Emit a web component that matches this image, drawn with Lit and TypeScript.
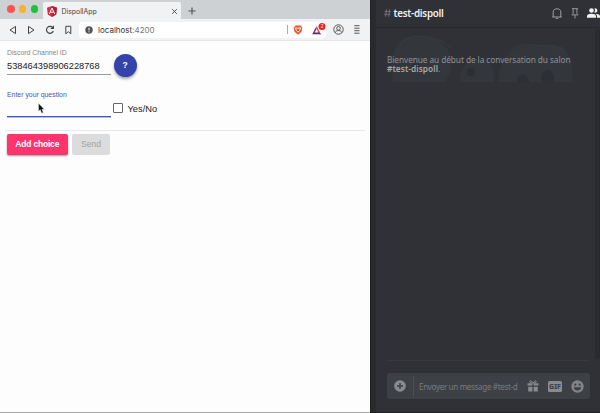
import { LitElement, html, css } from "lit";
import { customElement } from "lit/decorators.js";

@customElement("browser-window")
class BrowserWindow extends LitElement {
  static styles = css`
    :host { display: flex; flex-direction: column; width: 370px; height: 412px; background: #fdfdfe; color: #222; font-family: "Liberation Sans", Arial, sans-serif; }
    * { box-sizing: border-box; }
    svg { display: block; overflow: visible; flex: none; }
    .tabs { display: flex; height: 19px; flex: none; background: #cdd1d4; padding-left: 7px; }
    .lights { display: flex; gap: 4.3px; padding-top: 5px; width: 36px; flex: none; }
    .light { width: 7.5px; height: 7.5px; border-radius: 50%; flex: none; }
    .red { background: #f95650; }
    .amber { background: #fcb02c; }
    .green { background: #1fc136; }
    .tab { display: flex; align-items: center; width: 138px; margin-top: 2px; height: 17px; background: #f1f2f3; border-radius: 2px 2px 0 0; padding: 1px 4px 0 4px; font: 6.9px Inter, sans-serif; color: #444; }
    .title { margin-left: 4.5px; flex: 1; white-space: nowrap; }
    .plus { margin: 7px 0 0 7px; }
    .bar { display: flex; align-items: center; height: 22px; flex: none; background: #f1f2f3; border-bottom: 1px solid #e8e8e9; padding-left: 8px; }
    .nav { display: flex; gap: 8.3px; width: 71px; }
    .address { display: flex; align-items: center; width: 247px; height: 16px; border-radius: 3px; background: #fff; padding-left: 6px; }
    .url { margin-left: 5px; font: 8px/16px Inter, sans-serif; color: #333; flex: 1; }
    .port { color: #777; }
    .sep { width: 1px; height: 9px; background: #aaa; margin-right: 5px; }
    .shields { margin-right: 10px; }
    .user { margin-left: 7px; }
    .menu { margin-left: 10px; }
    .page { padding: 0 0 0 7px; display: flex; flex-direction: column; }
    .row { display: flex; }
    .field { width: 104px; }
    .label { font-size: 6.9px; line-height: 8px; color: #858585; white-space: nowrap; }
    .channel { margin-top: 8px; border-bottom: 1px solid #999; height: 25.5px; }
    .value { font-size: 9.25px; line-height: 11px; margin-top: 4px; color: #222; white-space: nowrap; }
    .help { width: 23px; height: 23px; border-radius: 50%; background: #3343ab; color: #fff; font-weight: bold; font-size: 8.5px; line-height: 23px; text-align: center; margin: 13px 0 0 2.5px; box-shadow: 0 2px 3px #0005; }
    .question { margin-top: 14px; height: 26px; border-bottom: 1px solid #4056c4; box-shadow: 0 1px 0 #4a5cba66; }
    .question .label { color: #4556b9; }
    .check { display: flex; align-items: center; margin: 25px 0 0 2px; height: 12px; font-size: 9.3px; gap: 5px; white-space: nowrap; }
    .box { width: 9.5px; height: 9.5px; border: 1px solid #666; border-radius: 1px; }
    .option { padding-top: 1px; }
    .rule { height: 1px; width: 360px; margin: 13px 0 0 -2px; background: #e9e9e9; }
    .buttons { display: flex; gap: 4.5px; margin-top: 3px; }
    .btn { height: 20.5px; border-radius: 2px; line-height: 20.5px; text-align: center; font-size: 8.6px; }
    .add { width: 60.5px; background: #fd346e; color: #fff; font-weight: bold; font-size: 8.5px; letter-spacing: -.2px; box-shadow: 0 1px 2px #0006; }
    .send { width: 38px; background: #dcdcdc; color: #a2a2a2; }
    .pointer { position: absolute; left: 38px; top: 102.5px; }
  `;
  render() {
    return html`
      <div class="tabs">
        <div class="lights"><span class="light red"></span><span class="light amber"></span><span class="light green"></span></div>
        <div class="tab">
          <svg width="10" height="11" viewBox="0 0 10 11"><path fill="#d92c3b" d="M5 0 10 1.8 9.2 8.5 5 11 .8 8.5 0 1.8Z"/><path fill="#b22235" d="M5 0 10 1.8 9.2 8.5 5 11Z"/><path fill="none" stroke="#fff" stroke-width="1" d="M2.3 8 5 2 7.7 8M3.5 6.2h3"/></svg>
          <span class="title">DispollApp</span>
          <svg width="5" height="5" viewBox="0 0 5 5"><path stroke="#444" stroke-width=".9" d="m.2.2 4.6 4.6M4.8.2.2 4.8"/></svg>
        </div>
        <svg class="plus" width="8" height="8" viewBox="0 0 8 8"><path stroke="#555" stroke-width="1.2" d="M.5 4h7M4 .5v7"/></svg>
      </div>
      <div class="bar">
        <div class="nav">
          <svg width="10" height="10" viewBox="0 0 10 10" fill="none" stroke="#444" stroke-width="1"><path stroke-linejoin="round" d="M7.5 1.4v7.2L2 5Z"/></svg>
          <svg width="10" height="10" viewBox="0 0 10 10" fill="none" stroke="#444" stroke-width="1"><path stroke-linejoin="round" d="M2.5 1.4v7.2L8 5Z"/></svg>
          <svg width="10" height="10" viewBox="0 0 10 10" fill="none" stroke="#444" stroke-width="1.15"><path d="M8 3A3.5 3.5 0 1 0 8.3 6M8.4.8v2.7H5.7"/></svg>
          <svg width="10" height="10" viewBox="0 0 10 10" fill="none" stroke="#444" stroke-width="1"><path d="M2.8 1.3h5v7.5L5.3 6.7 2.8 8.8Z"/></svg>
        </div>
        <div class="address">
          <svg width="8" height="8" viewBox="0 0 8 8"><circle cx="4" cy="4" r="3.7" fill="#505256"/><path stroke="#fff" stroke-width="1" d="M4 1.8v2.7M4 5.3v1"/></svg>
          <span class="url">localhost<span class="port">:4200</span></span>
          <span class="sep"></span>
          <svg class="shields" width="9" height="10" viewBox="0 0 9 10"><path fill="#f0522b" d="M2.7.5h4.6L9.3 2.3 8.5 6.7 5 9.7 1.5 6.7.7 2.3Z"/><path fill="none" stroke="#fff" stroke-width=".9" d="M2.3 2.7 5 3.3l2.7-.6-.9 2.5-1.8 2-1.8-2Z"/></svg>
          <svg width="14" height="14" viewBox="0 0 14 14"><path fill="#f04a32" d="m4.6 3 4.4 8.2H7.2L4.6 6Z"/><path fill="#9a2470" d="M4.6 3v3L2.7 9.5 .2 11.2Z"/><path fill="#502b82" d="m.2 11.2 1.8-1.8h5.1l1.9 1.8Z"/><circle cx="10" cy="3.4" r="3.5" fill="#f51b20"/><text x="10" y="5.1" text-anchor="middle" fill="#fff" font-size="4.8">2</text></svg>
        </div>
        <svg class="user" width="11" height="11" viewBox="0 0 11 11" fill="none" stroke="#555" stroke-width="1"><circle cx="5.5" cy="5.5" r="4.7"/><circle cx="5.5" cy="4.3" r="1.8"/><path d="M2.2 8.6c.5-1.6 1.6-2 3.3-2s2.8.4 3.3 2"/></svg>
        <svg class="menu" width="6" height="9" viewBox="0 0 6 9"><path stroke="#555" stroke-width="1" d="M.3 .7h5.2M.3 3.2h5.2M.3 5.7h5.2M.3 8.2h5.2"/></svg>
      </div>
      <div class="page">
        <div class="row">
          <div class="field channel"><div class="label">Discord Channel ID</div><div class="value">538464398906228768</div></div>
          <div class="help">?</div>
        </div>
        <div class="row">
          <div class="field question"><div class="label">Enter your question</div></div>
          <div class="check"><span class="box"></span><span class="option">Yes/No</span></div>
        </div>
        <div class="rule"></div>
        <div class="buttons"><div class="btn add">Add choice</div><div class="btn send">Send</div></div>
      </div>
      <svg class="pointer" width="7" height="11" viewBox="0 0 7 11"><path fill="#111" stroke="#fff" stroke-width=".4" d="M.5.3v8l1.8-1.5 1.4 3.4 1.6-.7-1.4-3.2h2.4Z"/></svg>
    `;
  }
}

@customElement("chat-panel")
class ChatPanel extends LitElement {
  static styles = css`
    :host { display: flex; width: 230px; height: 412px; background: #2f3136; font-family: "Noto Sans", "Open Sans", sans-serif; }
    * { box-sizing: border-box; }
    svg { display: block; overflow: visible; flex: none; }
    .edge { width: 6px; background: #282a2e; border-left: 1px solid #202226; flex: none; }
    .main { flex: 1; display: flex; flex-direction: column; min-width: 0; }
    .head { height: 28px; flex: none; display: flex; align-items: center; border-bottom: 1px solid #26282c; padding: 0 0 1px 8px; color: #f0f0f1; }
    .name { font: 600 9.8px "Noto Sans", sans-serif; letter-spacing: -.25px; margin-left: 2.5px; flex: 1; white-space: nowrap; }
    .bell { margin-right: 9px; }
    .pin { margin-right: 8px; }
    .people { margin-right: 1px; }
    .body { flex: 1; display: flex; }
    .content { width: 213px; padding-left: 11px; display: flex; flex-direction: column; }
    .welcome { height: 333px; border-bottom: 1px solid #393b40; width: 202px; display: flex; flex-direction: column; position: relative; }
    .art { position: absolute; left: 4px; top: 6px; }
    .intro { position: relative; margin-top: 26.5px; font-size: 8.3px; letter-spacing: -.08px; line-height: 10px; color: #909296; white-space: nowrap; }
    .first { height: 9.5px; }
    .second { height: 10px; letter-spacing: .06px; }
    b { color: #a6a8ab; font-weight: 600; }
    .input { width: 203px; height: 26px; margin-top: 12px; border-radius: 3px; background: #3d4045; display: flex; align-items: center; padding: 0 7px; color: #787b80; }
    .line { width: 1px; height: 21px; background: #4b4e53; margin: 0 5px 0 7px; flex: none; }
    .hint { font-size: 8.1px; letter-spacing: -.36px; flex: 1; min-width: 0; white-space: nowrap; }
    .icons { display: flex; gap: 9px; align-items: center; flex: none; margin-right: -.5px; }
    .track { width: 5px; margin: 1px 0 53px auto; background: #292b2f; border-radius: 2px 0 0 2px; }
  `;
  render() {
    return html`
      <div class="edge"></div>
      <div class="main">
        <div class="head">
          <svg width="7" height="8" viewBox="0 0 7 8" stroke="#74777d" stroke-width=".9"><path d="M2.5.3 1.5 7.7M5.7.3 4.7 7.7M.5 2.6h6.3M.1 5.3h6.3"/></svg>
          <span class="name">test-dispoll</span>
          <svg class="bell" width="10" height="11" viewBox="0 0 10 11" fill="none" stroke="#aaacb0" stroke-width=".9"><path d="M.2 9h9.6M1.2 9V3.8C1.2 2 2.8.8 5 .8s3.8 1.2 3.8 3V9M3.7 10.3h2.6"/></svg>
          <svg class="pin" width="8" height="11" viewBox="0 0 8 11" fill="none" stroke="#a0a2a6" stroke-width=".9"><path d="M1 .7h6M2.1.7v4.7L.9 6.9h6.2L5.9 5.4V.7M4 6.9v3.6"/></svg>
          <svg class="people" width="12" height="10" viewBox="0 0 12 10" fill="#f2f2f2"><circle cx="4.5" cy="2.5" r="2.3"/><path d="M0 9.7V8c0-3 9-3 9 0v1.7ZM7.4.3A2.3 2.3 0 1 1 7.4 4.7 3.5 3.5 0 0 0 7.4.3ZM8.3 5.8c3 .2 4.7 1 4.7 2.5v1.4h-3V8c0-1-.7-1.7-1.7-2.2Z"/></svg>
        </div>
        <div class="body">
          <div class="content">
            <div class="welcome">
              <svg class="art" width="190" height="50" viewBox="0 0 190 50" fill="#33363b"><path d="M2 48C-2 20 5 2 26 2c17 0 32 8 34 22 2 8-1 16-6 24ZM69 48c0-15 7-23 20-23 11 0 15 10 14 23ZM107 48c2-25 11-32 24-35 14-3 31-3 38-1 10 4 13 18 13 36Z"/><path fill="none" stroke="#383b40" d="M9 10C18-3 48 2 61 14M118 17c12-8 27-7 34-5M153 12c12 0 18 2 22 8"/><g fill="#2d2f34"><circle cx="25" cy="33" r="4"/><circle cx="80" cy="38" r="4"/><path d="M126 48c0-10 12-10 12 0ZM150 44c0-10 13-10 13 0s-13 5-13 0Z"/></g></svg>
              <div class="intro"><div class="first">Bienvenue au début de la conversation du salon</div><div class="second"><b>#test-dispoll</b>.</div></div>
            </div>
            <div class="input">
              <svg width="12" height="12" viewBox="0 0 12 12"><circle cx="6" cy="6" r="5.8" fill="#898b8f"/><path stroke="#3d4045" stroke-width="1.5" d="M6 3v6M3 6h6"/></svg>
              <span class="line"></span><span class="hint">Envoyer un message #test-d</span>
              <div class="icons">
                <svg width="12" height="12" viewBox="0 0 12 12" fill="#898b8f"><path d="M.5 3.3h4.9v2.3H.5ZM6.6 3.3h4.9v2.3H6.6ZM1.2 6.7h4.2v4.8H1.2ZM6.6 6.7h4.2v4.8H6.6Z"/><path fill="none" stroke="#898b8f" d="M5.6 3C2 3.4 2.3.6 3.7.8 5 1 5.6 3 6 3.2 6.4 3 7 1 8.3.8 9.7.6 10 3.4 6.4 3"/></svg>
                <svg width="14" height="11" viewBox="0 0 14 11"><rect width="14" height="11" rx="1.5" fill="#898b8f"/><text x="7" y="8.1" text-anchor="middle" fill="#3d4045" font-size="7" font-weight="800">GIF</text></svg>
                <svg width="13" height="13" viewBox="0 0 13 13"><circle cx="6.5" cy="6.5" r="6.2" fill="#818387"/><g fill="#3d4045"><circle cx="4.3" cy="4.7" r="1.1"/><circle cx="8.7" cy="4.7" r="1.1"/><path d="M2.8 7.2h7.4c-.6 4.3-6.8 4.3-7.4 0Z"/></g></svg>
              </div>
            </div>
          </div>
          <div class="track"></div>
        </div>
      </div>
    `;
  }
}

@customElement("app-root")
class AppRoot extends LitElement {
  static styles = css`
    :host { display: flex; position: relative; width: 600px; height: 413px; overflow: hidden; background: linear-gradient(90deg, #aaa 370px, #1e2023 370px); }
  `;
  render() {
    return html`<browser-window></browser-window><chat-panel></chat-panel>`;
  }
}
